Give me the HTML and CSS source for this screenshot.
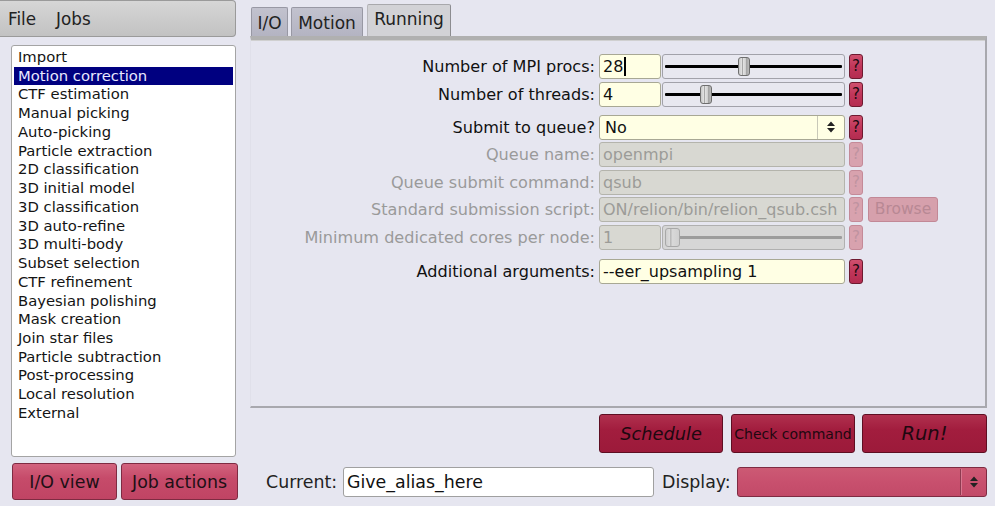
FILE: index.html
```html
<!DOCTYPE html>
<html>
<head>
<meta charset="utf-8">
<link rel="stylesheet" href="styles.css">
</head>
<body>
<div class="app">
  <div class="left">
    <div class="menubar"><span class="menu">File</span><span class="menu">Jobs</span></div>
    <div class="joblist">
      <div class="item">Import</div>
      <div class="item sel">Motion correction</div>
      <div class="item">CTF estimation</div>
      <div class="item">Manual picking</div>
      <div class="item">Auto-picking</div>
      <div class="item">Particle extraction</div>
      <div class="item">2D classification</div>
      <div class="item">3D initial model</div>
      <div class="item">3D classification</div>
      <div class="item">3D auto-refine</div>
      <div class="item">3D multi-body</div>
      <div class="item">Subset selection</div>
      <div class="item">CTF refinement</div>
      <div class="item">Bayesian polishing</div>
      <div class="item">Mask creation</div>
      <div class="item">Join star files</div>
      <div class="item">Particle subtraction</div>
      <div class="item">Post-processing</div>
      <div class="item">Local resolution</div>
      <div class="item">External</div>
    </div>
    <div class="leftbtns">
      <div class="btn pink iov">I/O view</div>
      <div class="btn pink jact">Job actions</div>
    </div>
  </div>
  <div class="right">
    <div class="tabs">
      <div class="tab t1">I/O</div>
      <div class="tab t2">Motion</div>
      <div class="tab t3 active">Running</div>
    </div>
    <div class="panel">
      <div class="form">
        <div class="row">
          <div class="lbl">Number of MPI procs:</div>
          <div class="ctl">
            <div class="inp short">28<span class="caret"></span></div>
            <div class="slider"><div class="track"></div><div class="thumb" style="left:75px"></div></div>
          </div>
          <div class="help">?</div>
        </div>
        <div class="row">
          <div class="lbl">Number of threads:</div>
          <div class="ctl">
            <div class="inp short">4</div>
            <div class="slider"><div class="track"></div><div class="thumb" style="left:37px"></div></div>
          </div>
          <div class="help">?</div>
        </div>
        <div class="row gapabove">
          <div class="lbl">Submit to queue?</div>
          <div class="ctl">
            <div class="choice">
              <span class="val">No</span>
              <span class="arrows"><svg width="10" height="14" viewBox="0 0 10 14"><path d="M1 6 L5 1.5 L9 6 Z M1 8 L5 12.5 L9 8 Z" fill="#222"/></svg></span>
            </div>
          </div>
          <div class="help">?</div>
        </div>
        <div class="row dis">
          <div class="lbl">Queue name:</div>
          <div class="ctl"><div class="inp wide">openmpi</div></div>
          <div class="help">?</div>
        </div>
        <div class="row dis">
          <div class="lbl">Queue submit command:</div>
          <div class="ctl"><div class="inp wide">qsub</div></div>
          <div class="help">?</div>
        </div>
        <div class="row dis">
          <div class="lbl">Standard submission script:</div>
          <div class="ctl"><div class="inp wide">ON/relion/bin/relion_qsub.csh</div></div>
          <div class="help">?</div>
          <div class="browse">Browse</div>
        </div>
        <div class="row dis">
          <div class="lbl">Minimum dedicated cores per node:</div>
          <div class="ctl">
            <div class="inp short">1</div>
            <div class="slider"><div class="track"></div><div class="thumb" style="left:2px"></div></div>
          </div>
          <div class="help">?</div>
        </div>
        <div class="row gapabove2">
          <div class="lbl">Additional arguments:</div>
          <div class="ctl"><div class="inp wide">--eer_upsampling 1</div></div>
          <div class="help">?</div>
        </div>
      </div>
    </div>
    <div class="runbtns">
      <div class="btn dark sched">Schedule</div>
      <div class="btn dark check">Check command</div>
      <div class="btn dark run">Run!</div>
    </div>
    <div class="bottom">
      <span class="blbl cur">Current:</span>
      <div class="alias">Give_alias_here</div>
      <span class="blbl disp">Display:</span>
      <div class="display">
        <span class="sep"></span>
        <span class="arrows"><svg width="10" height="14" viewBox="0 0 10 14"><path d="M1 6 L5 1.5 L9 6 Z M1 8 L5 12.5 L9 8 Z" fill="#222"/></svg></span>
      </div>
    </div>
  </div>
</div>
</body>
</html>
```

FILE: styles.css
```css
* { box-sizing: border-box; }
html, body { margin: 0; padding: 0; }
body {
  width: 995px;
  height: 506px;
  overflow: hidden;
  background: #e6e6f0;
  font-family: "DejaVu Sans", sans-serif;
  color: #1a1a1a;
}
.app { display: flex; height: 506px; }
.left { width: 250px; flex: none; }
.menubar {
  width: 236px;
  height: 37px;
  background: linear-gradient(#d6d6d6, #c2c2c2);
  border: 1px solid #9a9a9a;
  border-left: none;
  border-radius: 0 4px 4px 0;
  display: flex;
  align-items: center;
  padding-left: 8px;
  font-size: 16.8px;
  color: #222;
}
.menu { margin-right: 20px; }
.joblist {
  margin: 8px 0 0 11px;
  width: 225px;
  height: 412px;
  background: #fff;
  border: 1px solid #a4a4a4;
  border-radius: 3px;
  padding: 2px 2px 0 2px;
  font-size: 14.8px;
}
.item {
  height: 18.74px;
  line-height: 18.74px;
  padding-left: 4px;
  white-space: nowrap;
  color: #141414;
}
.item.sel { background: #000080; color: #e8e8ff; }
.leftbtns { display: flex; margin-top: 6px; padding-left: 12px; gap: 4px; }
.btn {
  height: 37px;
  display: flex;
  align-items: center;
  justify-content: center;
  border-radius: 3px;
  white-space: nowrap;
}
.pink {
  background: linear-gradient(#d2637e, #c64b6a 40%, #c04464);
  border: 1px solid #7e2b42;
  color: #1e1016;
  font-size: 17.4px;
}
.iov { width: 105px; }
.jact { width: 117px; }

.right { width: 737px; flex: none; }
.tabs { height: 36px; display: flex; align-items: flex-end; padding-left: 1px; }
.tab {
  height: 29px;
  display: flex;
  align-items: center;
  justify-content: center;
  background: linear-gradient(#c2c2ce, #b4b4c2);
  border: 1px solid #9898a4;
  border-bottom: none;
  border-radius: 2px 2px 0 0;
  font-size: 17px;
  color: #222;
  padding-top: 1px;
}
.t1 { width: 37px; }
.t2 { width: 72px; margin-left: 3px; }
.t3 { width: 84px; margin-left: 4px; }
.tab.active {
  height: 32px;
  background: #d2d2d6;
  border-color: #a8a8ac #8c8c90 #a8a8ac #b8b8bc;
  padding-bottom: 4px;
}
.panel {
  height: 372px;
  background: #e6e6f0;
  border-top: 4px solid #b0b0b0;
  border-right: 2px solid #a8a8ae;
  border-bottom: 2px solid #a8a8ae;
  border-left: 1px solid #e0e0ea;
  box-shadow: inset 0 1px 0 #d0d0d0;
  padding-top: 14px;
}
.form { display: flex; flex-direction: column; gap: 2.6px; }
.row { display: flex; align-items: center; height: 25px; }
.row.gapabove { margin-top: 5.5px; }
.row.gapabove2 { margin-top: 6.5px; }
.lbl {
  width: 345px;
  flex: none;
  text-align: right;
  font-size: 16.1px;
  white-space: nowrap;
  color: #111;
  padding-right: 1px;
}
.ctl { width: 246px; margin-left: 3px; display: flex; height: 25px; flex: none; }
.inp {
  height: 25px;
  background: #ffffe4;
  border: 1px solid #a8a894;
  border-radius: 3px;
  font-size: 16px;
  line-height: 23px;
  padding-left: 3px;
  color: #111;
  white-space: nowrap;
  overflow: hidden;
}
.inp.short { width: 62px; }
.inp.wide { width: 246px; }
.caret { display: inline-block; width: 2px; height: 19px; background: #000; vertical-align: -4px; margin-left: 1px; }
.slider {
  position: relative;
  width: 183px;
  margin-left: 1px;
  height: 25px;
  border: 1px solid #a2a2aa;
  border-radius: 3px;
  background: #e8e8f0;
}
.track {
  position: absolute;
  left: 2px; right: 2px;
  top: 10px;
  height: 3px;
  background: #000;
  border-radius: 1px;
}
.thumb {
  position: absolute;
  top: 2px;
  width: 12px;
  height: 19px;
  border: 1px solid #6e6e6e;
  border-radius: 3px;
  background: linear-gradient(90deg, #c8c8c8, #e4e4e4 30%, #a8a8a8 35%, #e0e0e0 45%, #d0d0d0 65%, #a0a0a0 70%, #bcbcbc);
}
.help {
  width: 14px;
  height: 25px;
  margin-left: 4px;
  flex: none;
  background: linear-gradient(#d0506e, #c0365a 50%, #b42c50);
  border: 1px solid #6e1a30;
  border-radius: 3px;
  font-size: 15px;
  line-height: 23px;
  text-align: center;
  color: #1a0a10;
}
.choice {
  width: 246px;
  height: 25px;
  background: #ffffe4;
  border: 1px solid #a8a894;
  border-radius: 3px;
  display: flex;
  align-items: center;
  font-size: 16px;
  color: #111;
}
.choice .val { flex: 1; padding-left: 5px; }
.arrows {
  height: 100%;
  width: 27px;
  display: flex;
  align-items: center;
  justify-content: center;
  border-left: 1px solid #c8c8b8;
}
.row.dis .lbl { color: #9a9a9a; }
.row.dis .inp { background: #d8d8d2; border-color: #b4b4ac; color: #9c9c98; }
.row.dis .slider { background: #d6d6d6; border-color: #b0b0b0; }
.row.dis .track { background: #9c9c9c; height: 3px; }
.row.dis .thumb { width: 15px; border-color: #a8a8a8; background: linear-gradient(90deg, #cfcfcf, #dcdcdc 30%, #b8b8b8 35%, #d8d8d8 50%, #d0d0d0); }
.row.dis .help { background: #d8a2ae; border-color: #c48a98; color: #bf93a0; }
.browse {
  width: 70px;
  height: 25px;
  margin-left: 5px;
  background: #d6a0ac;
  border: 1px solid #c28896;
  border-radius: 3px;
  font-size: 15.5px;
  line-height: 23px;
  text-align: center;
  color: #b88894;
}
.runbtns {
  display: flex;
  justify-content: flex-end;
  margin-top: 6px;
  height: 39px;
}
.dark {
  height: 39px;
  background: linear-gradient(#b0304e, #a21d3e 40%, #9c1a3a);
  border: 1px solid #5e0e22;
  color: #1e0810;
}
.sched { width: 124px; font-style: italic; font-size: 17.8px; }
.check { width: 124px; margin-left: 8px; font-size: 14px; }
.run { width: 125px; margin-left: 7px; font-style: italic; font-size: 19.5px; }
.bottom {
  display: flex;
  align-items: center;
  margin-top: 14px;
  height: 30px;
  font-size: 17.4px;
}
.blbl { color: #222; white-space: nowrap; }
.cur { margin-left: 16px; width: 77px; }
.alias {
  width: 311px;
  height: 30px;
  background: #fff;
  border: 1px solid #a0a0a0;
  border-radius: 3px;
  line-height: 28px;
  padding-left: 3px;
  color: #111;
}
.disp { margin-left: 8px; width: 75px; }
.display {
  width: 250px;
  height: 30px;
  background: linear-gradient(#cc5a74, #c8506e 50%, #c24a68);
  border: 1px solid #7e2b42;
  border-radius: 3px;
  display: flex;
  justify-content: flex-end;
  align-items: center;
}
.display .sep { width: 1px; height: 26px; background: #8e3a50; box-shadow: 1px 0 0 #d87890; }
.display .arrows { border-left: none; width: 25px; }
```
